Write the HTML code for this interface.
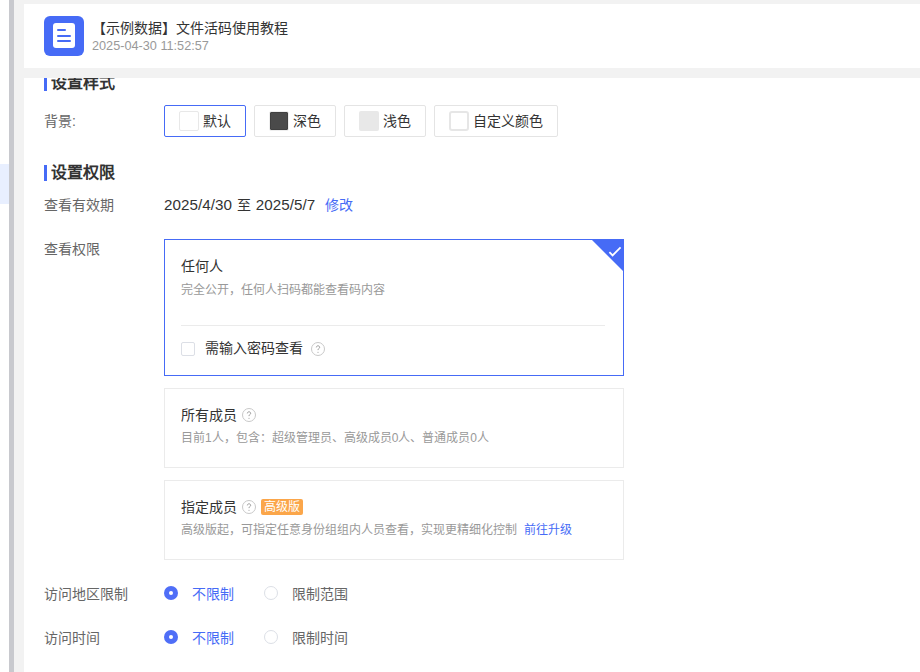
<!DOCTYPE html>
<html lang="zh-CN"><head><meta charset="utf-8">
<style>
*{box-sizing:border-box;margin:0;padding:0}
html,body{width:920px;height:672px;overflow:hidden;background:#fff}
body{position:relative;font-family:"Liberation Sans",sans-serif;color:#333}
.a{position:absolute;white-space:nowrap}
.t14{font-size:14px;line-height:14px}
.t12{font-size:12px;line-height:12px}
.t16{font-size:16px;line-height:16px;font-weight:bold}
.lbl{color:#666}
.sub{color:#999}
.blue{color:#466bf6}
.btn{position:absolute;top:105px;height:32px;border:1px solid #e4e4e4;border-radius:2px;background:#fff}
.btn.on{border-color:#466bf6}
.sw{position:absolute;left:14px;top:5px;width:20px;height:20px;border-radius:2px}
.bt{position:absolute;left:38px;top:8px;font-size:14px;line-height:14px;color:#333}
.card{position:absolute;left:164px;width:460px;border:1px solid #ebebeb;background:#fff}
.q{position:absolute;width:14px;height:14px}.q svg{display:block}
.radio{position:absolute;width:14px;height:14px;border-radius:50%}
.radio.on{background:#4f6ef7}
.radio.on::after{content:"";position:absolute;left:5px;top:5px;width:4px;height:4px;border-radius:50%;background:#fff}
.radio.off{border:1px solid #dcdfe6}
</style></head>
<body>
<!-- background structure -->
<div class="a" style="left:0;top:164px;width:9px;height:40px;background:#e8efff"></div>
<div class="a" style="left:9px;top:0;width:5px;height:672px;background:#c8c9ce"></div>
<div class="a" style="left:14px;top:0;width:906px;height:672px;background:#f2f2f2"></div>
<div class="a" style="left:24px;top:4px;width:896px;height:64px;background:#fff"></div>
<div class="a" style="left:24px;top:78px;width:896px;height:594px;background:#fff;overflow:hidden">
</div>

<!-- header -->
<div class="a" style="left:44px;top:16px;width:40px;height:40px;border-radius:6px;background:#466bf6"></div>
<div class="a" style="left:53px;top:23px;width:22px;height:25px;border-radius:3px;background:#fff"></div>
<div class="a" style="left:57px;top:29px;width:9px;height:2px;border-radius:1px;background:#466bf6"></div>
<div class="a" style="left:57px;top:35px;width:14px;height:2px;border-radius:1px;background:#466bf6"></div>
<div class="a" style="left:57px;top:40px;width:14px;height:2px;border-radius:1px;background:#466bf6"></div>
<div class="a t14" style="left:92px;top:21px;color:#333">【示例数据】文件活码使用教程</div>
<div class="a t12 sub" style="left:92px;top:40px;font-size:12.7px">2025-04-30 11:52:57</div>

<!-- content -->
<div class="a" style="left:24px;top:78px;width:896px;height:594px;overflow:hidden">
  <div class="a" style="left:20px;top:-3px;width:3px;height:16px;background:#466bf6"></div>
  <div class="a t16" style="left:27px;top:-3px">设置样式</div>
</div>

<div class="a t14 lbl" style="left:44px;top:114px">背景:</div>
<div class="btn on" style="left:164px;width:82px"><div class="sw" style="border:1px solid #e8e8e8"></div><div class="bt">默认</div></div>
<div class="btn" style="left:254px;width:82px"><div class="sw" style="border:1px solid #eee"><div style="width:18px;height:18px;margin:-1px 0 0 -1px;position:relative;left:1px;top:1px;background:#4a4a4a;border:1px solid #404040;border-radius:1px"></div></div><div class="bt">深色</div></div>
<div class="btn" style="left:344px;width:82px"><div class="sw" style="background:#e8e8e8"></div><div class="bt">浅色</div></div>
<div class="btn" style="left:434px;width:124px"><div class="sw" style="border:2px solid #e6e6e6;border-radius:3px"></div><div class="bt">自定义颜色</div></div>

<div class="a" style="left:44px;top:165px;width:3px;height:16px;background:#466bf6"></div>
<div class="a t16" style="left:51px;top:164.5px">设置权限</div>

<div class="a t14 lbl" style="left:44px;top:198px">查看有效期</div>
<div class="a t14" style="left:164px;top:198px"><span style="font-size:15.2px;letter-spacing:0.05px;word-spacing:0.6px">2025/4/30 </span>至<span style="font-size:15.2px;letter-spacing:0.05px;word-spacing:0.6px"> 2025/5/7</span></div>
<div class="a t14 blue" style="left:325px;top:198px">修改</div>

<div class="a t14 lbl" style="left:44px;top:242px">查看权限</div>

<div class="card" style="top:239px;height:137px;border-color:#466bf6;overflow:hidden">
  <svg class="a" style="right:-1px;top:-1px" width="33" height="33" viewBox="0 0 33 33"><path d="M0 0H33V33Z" fill="#466bf6"/><path d="M18.4 13.2L21.6 16.4L29.6 8.4" stroke="#fff" stroke-width="1.8" fill="none"/></svg>
  <div class="a t14" style="left:16px;top:18.5px">任何人</div>
  <div class="a t12 sub" style="left:16px;top:44px">完全公开，任何人扫码都能查看码内容</div>
  <div class="a" style="left:16px;top:85px;width:424px;height:1px;background:#ebebeb"></div>
  <div class="a" style="left:16px;top:102px;width:14px;height:14px;border:1px solid #dcdfe6;border-radius:2px"></div>
  <div class="a t14" style="left:40px;top:101px">需输入密码查看</div>
  <div class="q" style="left:146px;top:102px"><svg width="14" height="14" viewBox="0 0 14 14"><circle cx="7" cy="7" r="6.5" fill="none" stroke="#c8c8c8" stroke-width="1"/><path d="M5.3 5.4C5.3 4.5 6.1 3.8 7 3.8C7.9 3.8 8.7 4.5 8.7 5.3C8.7 6.3 7 6.5 7 8.1" fill="none" stroke="#999" stroke-width="1"/><circle cx="7" cy="10.2" r="0.55" fill="#999"/></svg></div>
</div>

<div class="card" style="top:388px;height:80px">
  <div class="a t14" style="left:16px;top:19px">所有成员</div>
  <div class="q" style="left:77px;top:19px"><svg width="14" height="14" viewBox="0 0 14 14"><circle cx="7" cy="7" r="6.5" fill="none" stroke="#c8c8c8" stroke-width="1"/><path d="M5.3 5.4C5.3 4.5 6.1 3.8 7 3.8C7.9 3.8 8.7 4.5 8.7 5.3C8.7 6.3 7 6.5 7 8.1" fill="none" stroke="#999" stroke-width="1"/><circle cx="7" cy="10.2" r="0.55" fill="#999"/></svg></div>
  <div class="a t12 sub" style="left:16px;top:42.5px">目前1人，包含：超级管理员、高级成员0人、普通成员0人</div>
</div>

<div class="card" style="top:480px;height:80px">
  <div class="a t14" style="left:16px;top:19px">指定成员</div>
  <div class="q" style="left:77px;top:19px"><svg width="14" height="14" viewBox="0 0 14 14"><circle cx="7" cy="7" r="6.5" fill="none" stroke="#c8c8c8" stroke-width="1"/><path d="M5.3 5.4C5.3 4.5 6.1 3.8 7 3.8C7.9 3.8 8.7 4.5 8.7 5.3C8.7 6.3 7 6.5 7 8.1" fill="none" stroke="#999" stroke-width="1"/><circle cx="7" cy="10.2" r="0.55" fill="#999"/></svg></div>
  <div class="a t12" style="left:96px;top:18px;height:16px;width:42px;background:#fba64a;color:#fff;border-radius:2px;text-align:center;line-height:16px">高级版</div>
  <div class="a t12 sub" style="left:16px;top:42.5px">高级版起，可指定任意身份组组内人员查看，实现更精细化控制</div>
  <div class="a t12 blue" style="left:359px;top:42.5px">前往升级</div>
</div>

<div class="a t14 lbl" style="left:44px;top:587px">访问地区限制</div>
<div class="radio on" style="left:164px;top:586px"></div>
<div class="a t14 blue" style="left:192px;top:586.5px">不限制</div>
<div class="radio off" style="left:264px;top:586px"></div>
<div class="a t14 lbl" style="left:292px;top:587px">限制范围</div>

<div class="a t14 lbl" style="left:44px;top:631px">访问时间</div>
<div class="radio on" style="left:164px;top:630px"></div>
<div class="a t14 blue" style="left:192px;top:630.5px">不限制</div>
<div class="radio off" style="left:264px;top:630px"></div>
<div class="a t14 lbl" style="left:292px;top:631px">限制时间</div>
</body></html>
